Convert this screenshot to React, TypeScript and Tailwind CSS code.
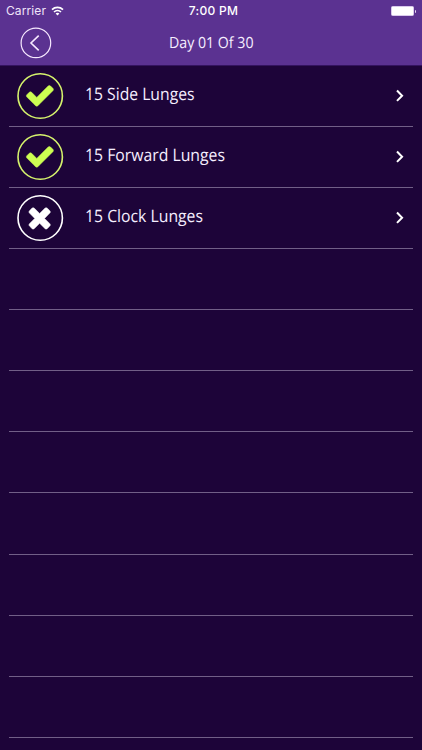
import React from "react";

type Exercise = { label: string; width: number; done: boolean };

const exercises: Exercise[] = [
  { label: "15 Side Lunges", width: 109.5, done: true },
  { label: "15 Forward Lunges", width: 140, done: true },
  { label: "15 Clock Lunges", width: 118, done: false },
];

const emptyRows = Array.from({ length: 8 }, (_, i) => i);

const CHECK =
  "M1671 566q0 40-28 68l-724 724-136 136q-28 28-68 28t-68-28l-136-136-362-362q-28-28-28-68t28-68l136-136q28-28 68-28t68 28l294 295 656-657q28-28 68-28t68 28l136 136q28 28 28 68z";
const CROSS =
  "M1490 1322q0 40-28 68l-136 136q-28 28-68 28t-68-28l-294-294-294 294q-28 28-68 28t-68-28l-136-136q-28-28-28-68t28-68l294-294-294-294q-28-28-28-68t28-68l136-136q28-28 68-28t68 28l294 294 294-294q28-28 68-28t68 28l136 136q28 28 28 68t-28 68l-294 294 294 294q28 28 28 68z";

/** Text fitted to a fixed width, for the slightly condensed humanist look. */
function FittedText({ text, width, size }: { text: string; width: number; size: number }) {
  return (
    <svg width={width} height="26" className="block overflow-visible">
      <text
        x="0"
        y="19"
        fill="#f6efff"
        fontSize={size}
        fontFamily='"Open Sans", "Noto Sans", sans-serif'
        textRendering="geometricPrecision"
        textLength={width}
        lengthAdjust="spacingAndGlyphs"
      >
        {text}
      </text>
    </svg>
  );
}

function StatusIcon({ done }: { done: boolean }) {
  return (
    <svg width="48" height="48" viewBox="0 0 48 48" className="block shrink-0">
      <circle cx="24.2" cy="24" r="22.2" fill="none" stroke={done ? "#d5f36c" : "#ffffff"} strokeWidth="1.6" />
      <g transform={done ? "translate(8.3 7.7) scale(0.0174)" : "translate(7.6 7.2) scale(0.0179)"}>
        <path
          d={done ? CHECK : CROSS}
          fill={done ? "#cdfe52" : "#ffffff"}
          stroke={done ? "#cdfe52" : "#ffffff"}
          strokeWidth="30"
        />
      </g>
    </svg>
  );
}

function StatusBar() {
  return (
    <div className="flex h-[22px] items-center justify-between pl-[6px] pr-[6px] font-['Inter','Liberation_Sans',sans-serif] text-white">
      <div className="flex flex-1 items-center gap-[5px]">
        <span className="text-[12px] leading-[22px] tracking-[0.1px] text-[#f0e4fa]">Carrier</span>
        <svg width="13" height="10" viewBox="0 0 13 10" className="block">
          <path d="M1 3.6a8 8 0 0 1 11 0" fill="none" stroke="white" strokeWidth="1.7" />
          <path d="M3 6a5 5 0 0 1 7 0" fill="none" stroke="white" strokeWidth="1.6" />
          <path d="M6.5 9.5 4.6 7.6a2.8 2.8 0 0 1 3.8 0Z" fill="white" />
        </svg>
      </div>
      <span className="ml-[5px] text-[12px] font-medium leading-[22px] tracking-[0.3px]">7:00 PM</span>
      <div className="flex flex-1 items-center justify-end">
        <div className="h-[10px] w-[23px] rounded-[1.5px] border border-[#d9c9ec] bg-white" />
        <div className="ml-px h-[3px] w-[1.5px] rounded-r-sm bg-[#e5d9f2]" />
      </div>
    </div>
  );
}

export default function App() {
  return (
    <div className="flex h-[750px] w-[422px] flex-col overflow-hidden bg-[#1d0439]">
      <header className="h-[66px] shrink-0 border-b border-[#34145f] bg-[#5b3291]">
        <StatusBar />
        <div className="grid h-[42px] grid-cols-[1fr_auto_1fr] items-center">
          <button aria-label="Back" className="ml-[20px] w-8">
            <svg width="32" height="32" viewBox="0 0 32 32" fill="none" stroke="#f7e9ff" className="block">
              <circle cx="15.9" cy="15.9" r="14.8" strokeWidth="1.2" />
              <path d="M18.7 8.6 11 16l7.7 7.4" strokeWidth="1.6" />
            </svg>
          </button>
          <div className="-mt-[3px]">
            <FittedText text="Day 01 Of 30" width={84.5} size={15.4} />
          </div>
          <span />
        </div>
      </header>
      <main className="flex flex-col pl-[9px] pr-[9px]">
        {exercises.map((e) => (
          <div key={e.label} className="flex h-[61.07px] shrink-0 items-center border-b border-[#715f87] pl-[7px] pr-[8.5px]">
            <StatusIcon done={e.done} />
            <div className="-mt-[4px] ml-[21px] flex-1">
              <FittedText text={e.label} width={e.width} size={17} />
            </div>
            <svg width="10" height="14" viewBox="0 0 10 14" fill="none" stroke="#fff" strokeWidth="2" className="block">
              <path d="m2 1.5 5.1 5.2L2 11.9" />
            </svg>
          </div>
        ))}
        {emptyRows.map((i) => (
          <div key={i} className="h-[61.07px] shrink-0 border-b border-[#715f87]" />
        ))}
      </main>
    </div>
  );
}
